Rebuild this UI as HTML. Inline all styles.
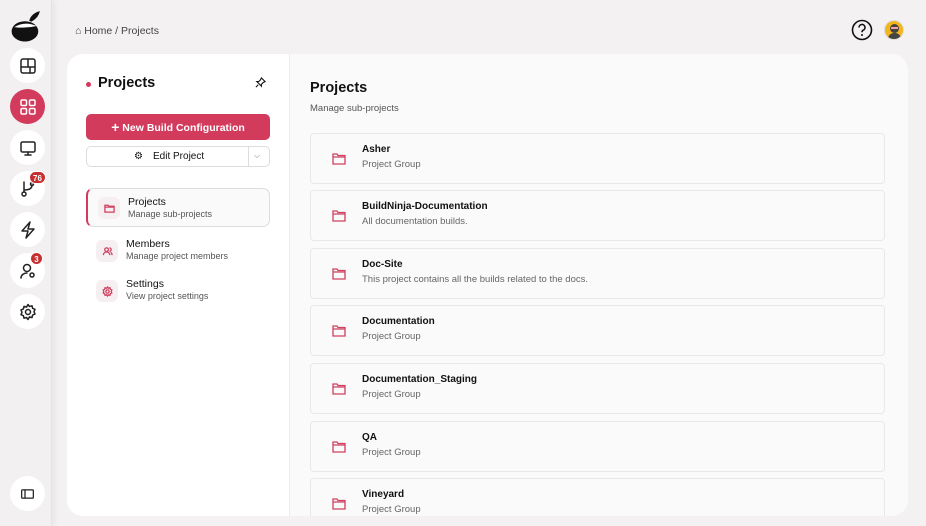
<!DOCTYPE html>
<html><head><meta charset="utf-8"><style>
*{box-sizing:border-box;margin:0;padding:0}
body{width:926px;height:526px;overflow:hidden;background:#f3f1f2;font-family:"Liberation Sans",sans-serif;color:#111;position:relative}
.side{position:absolute;left:0;top:0;width:52px;height:526px;background:#f2f0f1;border-right:1px solid #e6e3e4;box-shadow:2px 0 6px rgba(0,0,0,.06)}
.ic{position:absolute;left:10px;width:35px;height:35px;border-radius:50%;background:#fff;display:flex;align-items:center;justify-content:center}
.ic svg{width:18px;height:18px;fill:none;stroke:#222;stroke-width:1.5;stroke-linecap:round;stroke-linejoin:round}
.badge{position:absolute;background:#c62f2f;color:#fff;font-size:8px;font-weight:bold;border-radius:8px;height:13px;min-width:13px;padding:0 3px;line-height:13px;text-align:center;border:1px solid #fff}
.crumb{position:absolute;left:75px;top:25px;font-size:10.5px;color:#444}
.card{position:absolute;left:67px;top:54px;width:841px;height:462px;border-radius:16px;background:#fafafa;overflow:hidden}
.lp{position:absolute;left:0;top:0;width:223px;height:462px;background:#fff;border-right:1px solid #ececec}
.btn{position:absolute;left:19px;width:184px;height:26px;border-radius:5px}
.nav{position:absolute;left:19px;width:184px;height:39px;border-radius:7px}
.nav .i{position:absolute;left:10px;top:8px;width:22px;height:22px;border-radius:6px;background:#f6eff1;display:flex;align-items:center;justify-content:center}
.nav .i svg{width:11px;height:11px;fill:none;stroke:#d0405f;stroke-width:1.4}
.nav b{position:absolute;left:40px;top:7px;font-size:10.5px;font-weight:normal;color:#111}
.nav span{position:absolute;left:40px;top:20px;font-size:9px;color:#555}
.it{position:absolute;left:243px;width:575px;height:51px;border:1px solid #e8e8e8;border-radius:4px;background:#fafafa}
.it svg{position:absolute;left:21px;top:19px;width:14px;height:12px;fill:none;stroke:#d0405f;stroke-width:1.3}
.it b{position:absolute;left:51px;top:10px;font-size:10px}
.it span{position:absolute;left:51px;top:25px;font-size:9.5px;color:#666}
</style></head><body>
<div class="side">
<svg style="position:absolute;left:10px;top:10px" width="32" height="32" viewBox="0 0 30 30"><ellipse cx="14" cy="20" rx="12.5" ry="9.5" fill="#111"/><path d="M4 16 Q14 10 25 15 Q15 17.5 4 16Z" fill="#fff"/><path d="M18 10 Q20 3 28 1 Q27 7 20 11Z" fill="#111"/></svg>
<div class="ic" style="top:48px"><svg viewBox="0 0 18 18"><rect x="2" y="2" width="14" height="14" rx="2"/><path d="M2 10h14M9 2v8M11 10v6"/></svg></div>
<div class="ic" style="top:89px;background:#d33b5d"><svg viewBox="0 0 18 18" style="stroke:#fff"><rect x="2" y="2" width="5.5" height="5.5" rx="1.2"/><rect x="10.5" y="2" width="5.5" height="5.5" rx="1.2"/><rect x="2" y="10.5" width="5.5" height="5.5" rx="1.2"/><rect x="10.5" y="10.5" width="5.5" height="5.5" rx="1.2"/></svg></div>
<div class="ic" style="top:130px"><svg viewBox="0 0 18 18"><rect x="2" y="3" width="14" height="10" rx="1.5"/><path d="M9 13v3M6 16h6"/></svg></div>
<div class="ic" style="top:171px"><svg viewBox="0 0 18 18"><circle cx="5" cy="14" r="2"/><path d="M5 2v10M5 10c6 0 8-2 8-5"/><circle cx="13" cy="4" r="1.5"/></svg></div>
<div class="badge" style="left:29px;top:171px">76</div>
<div class="ic" style="top:212px"><svg viewBox="0 0 18 18"><path d="M11 1L3 10h6l-2 7 8-9H9z"/></svg></div>
<div class="ic" style="top:253px"><svg viewBox="0 0 18 18"><circle cx="8" cy="6" r="3.5"/><path d="M2 16c0-3 3-5 6-5"/><circle cx="13" cy="13" r="2"/></svg></div>
<div class="badge" style="left:30px;top:252px">3</div>
<div class="ic" style="top:294px"><svg viewBox="0 0 18 18"><circle cx="9" cy="9" r="2.5"/><path d="M9 1.5l1.5 2 2.5-.7.6 2.5 2.4 1-1 2.4 1 2.4-2.4 1-.6 2.5-2.5-.7L9 16.5l-1.5-2-2.5.7-.6-2.5-2.4-1 1-2.4-1-2.4 2.4-1 .6-2.5 2.5.7z"/></svg></div>
<div class="ic" style="top:476px"><svg viewBox="0 0 18 18" style="width:15px"><rect x="2" y="4" width="14" height="10" rx="1"/><path d="M6 4v10"/></svg></div>
</div>
<div class="crumb">⌂ Home / Projects</div>
<svg style="position:absolute;left:851px;top:19px" width="22" height="22" viewBox="0 0 22 22"><circle cx="11" cy="11" r="9.5" fill="none" stroke="#111" stroke-width="1.6"/><path d="M8 8.5a3 3 0 1 1 4 2.8c-.8.4-1 1-1 2" fill="none" stroke="#111" stroke-width="1.6"/><circle cx="11" cy="16" r="1" fill="#111"/></svg>
<div style="position:absolute;left:884px;top:20px;width:20px;height:20px;border-radius:50%;background:#f2b51c;overflow:hidden;border:1px solid #ddd"><div style="position:absolute;left:5px;top:3px;width:9px;height:9px;border-radius:50%;background:#444"></div><div style="position:absolute;left:6px;top:6px;width:7px;height:2px;background:#f4a0a0"></div><div style="position:absolute;left:3px;top:12px;width:13px;height:9px;border-radius:6px 6px 0 0;background:#444"></div></div>
<div class="card">
<div class="lp">
<div style="position:absolute;left:19px;top:28px;width:5px;height:5px;border-radius:50%;background:#d33b5d"></div>
<div style="position:absolute;left:31px;top:21px;font-size:14.5px;font-weight:bold">Projects</div>
<svg style="position:absolute;left:188px;top:23px" width="11" height="11" viewBox="0 0 12 12" fill="none" stroke="#111" stroke-width="1.2"><path d="M7 1l4 4-2 1-2 2 0 2-5-5 2 0 2-2z M3.5 8.5L1 11"/></svg>
<div class="btn" style="top:60px;background:#d33b5d;color:#fff;font-size:10.5px;font-weight:bold;text-align:center;line-height:26px"><span style="font-size:14px;vertical-align:-1px">+</span> New Build Configuration</div>
<div class="btn" style="top:92px;height:21px;border:1px solid #ddd;background:#fff;font-size:10px;line-height:19px"><span style="position:absolute;left:47px">⚙</span><span style="position:absolute;left:66px">Edit Project</span><div style="position:absolute;left:161px;top:0;width:1px;height:19px;background:#ddd"></div><span style="position:absolute;left:167px;top:-1px;color:#777;font-size:8px">⌵</span></div>
<div class="nav" style="top:134px;border:1px solid #ddd;border-left:2px solid #d33b5d;background:#fafafa"><div class="i"><svg viewBox="0 0 12 12"><path d="M1 2.5h3.5l1 1H11v6.5H1z M1 4.5h10"/></svg></div><b>Projects</b><span>Manage sub-projects</span></div>
<div class="nav" style="top:178px"><div class="i"><svg viewBox="0 0 12 12"><circle cx="5" cy="4" r="2"/><path d="M1.5 10c0-2 1.5-3.5 3.5-3.5S8.5 8 8.5 10M8 2a2 2 0 0 1 0 4M9.5 7c1 .5 1.5 1.5 1.5 3"/></svg></div><b style="left:40px;top:6px">Members</b><span style="top:19px">Manage project members</span></div>
<div class="nav" style="top:218px"><div class="i"><svg viewBox="0 0 12 12"><circle cx="6" cy="6" r="1.8"/><path d="M6 1l1 1.4 1.7-.5.4 1.7 1.6.7-.7 1.7.7 1.7-1.6.7-.4 1.7-1.7-.5L6 11l-1-1.4-1.7.5-.4-1.7-1.6-.7.7-1.7-.7-1.7 1.6-.7.4-1.7 1.7.5z"/></svg></div><b style="top:6px">Settings</b><span style="top:19px">View project settings</span></div>
</div>
<div style="position:absolute;left:243px;top:26px;font-size:14.5px;font-weight:bold">Projects</div>
<div style="position:absolute;left:243px;top:49px;font-size:9.5px;color:#555">Manage sub-projects</div>
<div class="it" style="top:79px"><svg viewBox="0 0 14 12"><path d="M1 1h4l1 1.5h7V11H1z M1 4h12"/></svg><b>Asher</b><span>Project Group</span></div>
<div class="it" style="top:136px"><svg viewBox="0 0 14 12"><path d="M1 1h4l1 1.5h7V11H1z M1 4h12"/></svg><b>BuildNinja-Documentation</b><span>All documentation builds.</span></div>
<div class="it" style="top:194px"><svg viewBox="0 0 14 12"><path d="M1 1h4l1 1.5h7V11H1z M1 4h12"/></svg><b>Doc-Site</b><span>This project contains all the builds related to the docs.</span></div>
<div class="it" style="top:251px"><svg viewBox="0 0 14 12"><path d="M1 1h4l1 1.5h7V11H1z M1 4h12"/></svg><b>Documentation</b><span>Project Group</span></div>
<div class="it" style="top:309px"><svg viewBox="0 0 14 12"><path d="M1 1h4l1 1.5h7V11H1z M1 4h12"/></svg><b>Documentation_Staging</b><span>Project Group</span></div>
<div class="it" style="top:367px"><svg viewBox="0 0 14 12"><path d="M1 1h4l1 1.5h7V11H1z M1 4h12"/></svg><b>QA</b><span>Project Group</span></div>
<div class="it" style="top:424px"><svg viewBox="0 0 14 12"><path d="M1 1h4l1 1.5h7V11H1z M1 4h12"/></svg><b>Vineyard</b><span>Project Group</span></div>
</div>
</body></html>
